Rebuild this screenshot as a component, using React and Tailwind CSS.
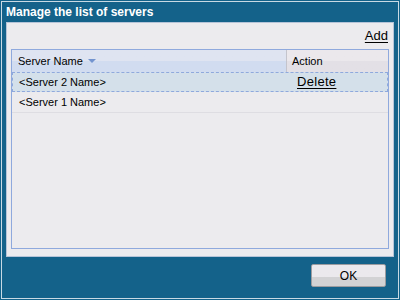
import React from "react";

const servers = [
  { name: "<Server 2 Name>", selected: true },
  { name: "<Server 1 Name>", selected: false },
];

const App = () => {
  return (
    <div className="w-[400px] h-[300px] bg-[#14628a] p-px font-['Liberation_Sans',Arial,sans-serif]">
      <div className="h-full border border-[#c9dae4] flex flex-col">
        {/* title bar */}
        <div className="h-[20px] pl-[4px] pt-[3px] text-white font-bold text-[12px] leading-[14px]">
          Manage the list of servers
        </div>

        {/* content panel */}
        <div className="mx-[4px] h-[235px] bg-[#ecebee] border border-[#b6c4d8] px-[4px] flex flex-col">
          <div className="h-[26px] flex justify-end items-start pt-[5px] pr-[1px]">
            <a className="text-[13px] leading-[15px] text-black underline underline-offset-2">
              Add
            </a>
          </div>

          <div className="h-[200px] border border-[#8fa9dd] flex flex-col">
            {/* header */}
            <div className="h-[22px] flex text-[11px] text-black">
              <div className="flex-1 flex items-center pl-[6px] bg-gradient-to-b from-[#dfe4f1] from-50% to-[#d1dcf0] to-50%">
                Server Name
                <svg width="8" height="5" viewBox="0 0 8 5" className="ml-[5px]">
                  <path d="M0 0H8L4 4Z" fill="#7394cf" />
                </svg>
              </div>
              <div className="w-[102px] flex items-center pl-[5px] border-l border-[#c4c4cc] bg-gradient-to-b from-[#ebe8ec] from-50% to-[#e3e0e6] to-50%">
                Action
              </div>
            </div>

            {/* rows */}
            {servers.map((s) => (
              <div
                key={s.name}
                className={
                  s.selected
                    ? "h-[20px] flex items-center text-[11px] bg-[#d4e0ea] border border-dashed border-[#8fa9dd]"
                    : "h-[21px] flex items-center text-[11px] border-b border-[#dedde2]"
                }
              >
                <div className={s.selected ? "flex-1 pl-[6px]" : "flex-1 pl-[7px]"}>{s.name}</div>
                <div className="w-[101px] pl-[11px]">
                  {s.selected && (
                    <a className="text-[13px] tracking-[0.3px] underline underline-offset-2">Delete</a>
                  )}
                </div>
              </div>
            ))}
          </div>
        </div>

        {/* footer */}
        <div className="flex-1 flex justify-end items-start pt-[7px] pr-[12px]">
          <button className="w-[75px] h-[23px] border border-[#9c9ca0] rounded-[2px] text-[12px] text-black bg-gradient-to-b from-[#ebe9ed] from-55% to-[#d2d2d4] to-55%">
            OK
          </button>
        </div>
      </div>
    </div>
  );
};

export default App;
